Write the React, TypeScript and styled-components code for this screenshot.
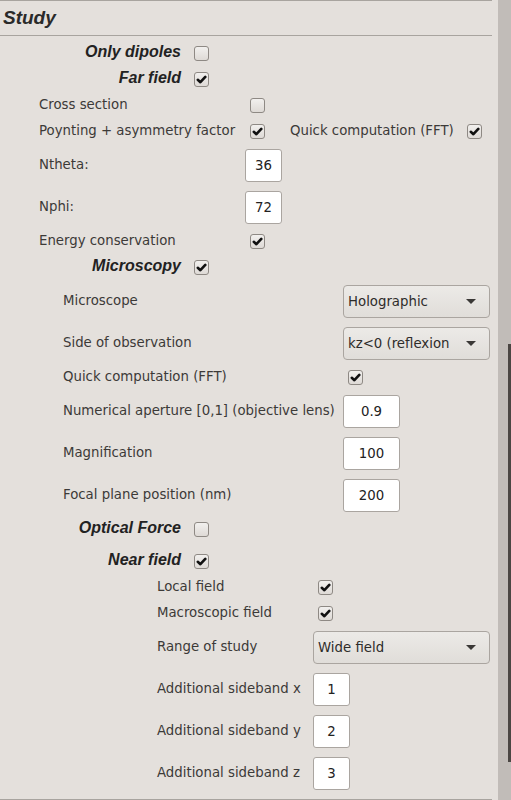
import React from "react";
import styled, { createGlobalStyle } from "styled-components";

const Global = createGlobalStyle`
  html, body { margin: 0; padding: 0; background: #e4e0dc; overflow: hidden; }
  body { font-family: "DejaVu Sans", "Noto Sans", sans-serif; }
`;

const Page = styled.div`
  display: flex;
  width: 511px;
  height: 800px;
  background: #e4e0dc;
`;

const Main = styled.div`
  width: 492px;
  margin-right: 6px;
  display: flex;
  flex-direction: column;
`;

const Panel = styled.div`
  border-top: 1px solid #a8a49f;
  border-bottom: 1px solid #a8a49f;
`;

const Title = styled.div`
  height: 34px;
  display: flex;
  align-items: center;
  padding-left: 3px;
  border-bottom: 1px solid #a8a49f;
  font-family: "Liberation Sans", Arial, sans-serif;
  font-weight: bold;
  font-style: italic;
  font-size: 19px;
  color: #2a2a2a;
`;

const Body = styled.div`
  padding: 4px 0 5px 0;
  display: flex;
  flex-direction: column;
`;

const Row = styled.div<{ $h: number; $indent?: number; $mt?: number }>`
  display: flex;
  align-items: center;
  height: ${(p) => p.$h}px;
  padding-left: ${(p) => p.$indent ?? 0}px;
  margin-top: ${(p) => p.$mt ?? 0}px;
`;

const SectionLabel = styled.div`
  width: 181px;
  padding-right: 8px;
  text-align: right;
  font-family: "Liberation Sans", Arial, sans-serif;
  font-weight: bold;
  font-style: italic;
  font-size: 16px;
  color: #222;
  margin-top: -3px;
`;

const Label = styled.div<{ $w: number }>`
  width: ${(p) => p.$w}px;
  flex: none;
  font-size: 13.3px;
  color: #3c3a38;
  white-space: nowrap;
  margin-top: -2px;
`;

const CheckBox = styled.span`
  display: inline-flex;
  align-items: center;
  justify-content: center;
  box-sizing: border-box;
  width: 15px;
  height: 15px;
  margin-left: 5px;
  border: 1px solid #8e8984;
  border-radius: 3px;
  background: linear-gradient(#f2f0ee, #dedad6);
  flex: none;
`;

const Input = styled.div<{ $w: number }>`
  box-sizing: border-box;
  width: ${(p) => p.$w}px;
  height: 33px;
  background: #fff;
  border: 1px solid #aaa5a0;
  border-radius: 3px;
  display: flex;
  align-items: center;
  justify-content: center;
  font-size: 13.3px;
  color: #222;
  flex: none;
`;

const Select = styled.div<{ $w: number }>`
  box-sizing: border-box;
  width: ${(p) => p.$w}px;
  height: 33px;
  border: 1px solid #aaa5a0;
  border-radius: 4px;
  background: linear-gradient(#eceae7, #e0ddd9);
  display: flex;
  align-items: center;
  justify-content: space-between;
  padding: 0 13px 0 4px;
  font-size: 13.3px;
  color: #2e2c2a;
  flex: none;
`;

const Arrow = styled.span`
  width: 0;
  height: 0;
  border-left: 5px solid transparent;
  border-right: 5px solid transparent;
  border-top: 5px solid #3a3836;
`;

const Gap = styled.div<{ $w: number }>`
  width: ${(p) => p.$w}px;
  flex: none;
`;

const Scrollbar = styled.div`
  width: 13px;
  height: 800px;
  background: #c1bcb8;
  display: flex;
  justify-content: flex-end;
`;

const Thumb = styled.div`
  width: 3px;
  height: 418px;
  margin-top: 344px;
  background: #4b4643;
`;

const Check = ({ checked }: { checked?: boolean }) => (
  <CheckBox>
    {checked && (
      <svg width="11" height="11" viewBox="0 0 11 11">
        <path d="M1.8 5.8 L4.4 8.2 L9.3 2.9" fill="none" stroke="#111" strokeWidth="2.6" strokeLinecap="round" strokeLinejoin="round" />
      </svg>
    )}
  </CheckBox>
);

const Section = ({ label, checked, mt }: { label: string; checked?: boolean; mt?: number }) => (
  <Row $h={26} $mt={mt}>
    <SectionLabel>{label}</SectionLabel>
    <Check checked={checked} />
  </Row>
);

export default function App() {
  return (
    <>
      <Global />
      <Page>
        <Main>
          <Panel>
            <Title>Study</Title>
            <Body>
              <Section label="Only dipoles" />
              <Section label="Far field" checked />
              <Row $h={26} $indent={39}>
                <Label $w={206}>Cross section</Label>
                <Check />
              </Row>
              <Row $h={26} $indent={39}>
                <Label $w={206}>Poynting + asymmetry factor</Label>
                <Check checked />
                <Gap $w={25} />
                <Label $w={172}>Quick computation (FFT)</Label>
                <Check checked />
              </Row>
              <Row $h={42} $indent={39}>
                <Label $w={206}>Ntheta:</Label>
                <Input $w={37}>36</Input>
              </Row>
              <Row $h={42} $indent={39}>
                <Label $w={206}>Nphi:</Label>
                <Input $w={37}>72</Input>
              </Row>
              <Row $h={26} $indent={39}>
                <Label $w={206}>Energy conservation</Label>
                <Check checked />
              </Row>
              <Section label="Microscopy" checked />
              <Row $h={42} $indent={63}>
                <Label $w={280}>Microscope</Label>
                <Select $w={147}>
                  Holographic
                  <Arrow />
                </Select>
              </Row>
              <Row $h={42} $indent={63}>
                <Label $w={280}>Side of observation</Label>
                <Select $w={147}>
                  kz&lt;0 (reflexion
                  <Arrow />
                </Select>
              </Row>
              <Row $h={26} $indent={63}>
                <Label $w={280}>Quick computation (FFT)</Label>
                <Check checked />
              </Row>
              <Row $h={42} $indent={63}>
                <Label $w={280}>Numerical aperture [0,1] (objective lens)</Label>
                <Input $w={57}>0.9</Input>
              </Row>
              <Row $h={42} $indent={63}>
                <Label $w={280}>Magnification</Label>
                <Input $w={57}>100</Input>
              </Row>
              <Row $h={42} $indent={63}>
                <Label $w={280}>Focal plane position (nm)</Label>
                <Input $w={57}>200</Input>
              </Row>
              <Section label="Optical Force" />
              <Section label="Near field" checked mt={6} />
              <Row $h={26} $indent={157}>
                <Label $w={156}>Local field</Label>
                <Check checked />
              </Row>
              <Row $h={26} $indent={157}>
                <Label $w={156}>Macroscopic field</Label>
                <Check checked />
              </Row>
              <Row $h={42} $indent={157}>
                <Label $w={156}>Range of study</Label>
                <Select $w={177}>
                  Wide field
                  <Arrow />
                </Select>
              </Row>
              <Row $h={42} $indent={157}>
                <Label $w={156}>Additional sideband x</Label>
                <Input $w={37}>1</Input>
              </Row>
              <Row $h={42} $indent={157}>
                <Label $w={156}>Additional sideband y</Label>
                <Input $w={37}>2</Input>
              </Row>
              <Row $h={42} $indent={157}>
                <Label $w={156}>Additional sideband z</Label>
                <Input $w={37}>3</Input>
              </Row>
            </Body>
          </Panel>
        </Main>
        <Scrollbar>
          <Thumb />
        </Scrollbar>
      </Page>
    </>
  );
}
